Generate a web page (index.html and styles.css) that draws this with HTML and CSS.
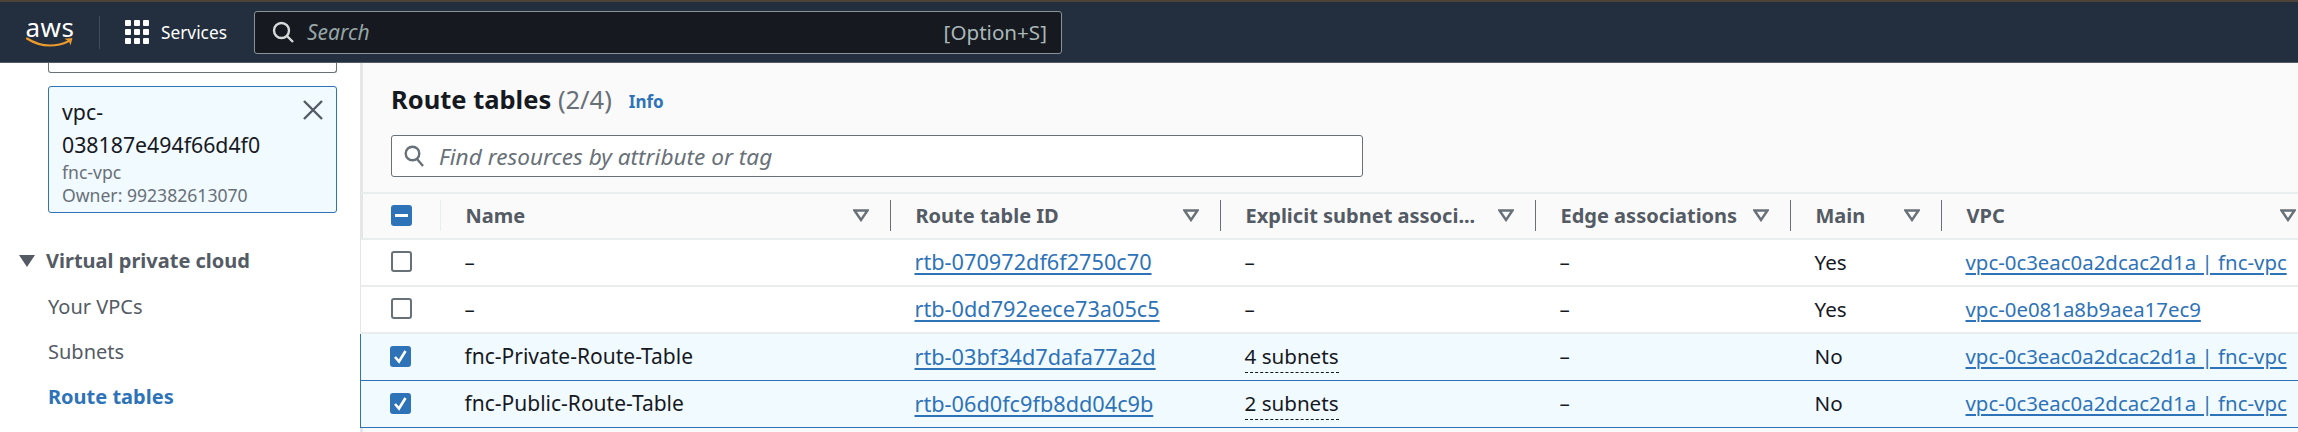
FILE: index.html
```html
<!DOCTYPE html>
<html>
<head>
  <meta charset="UTF-8" />
  <title>Route tables</title>
  <link rel="stylesheet" href="styles.css">
</head>
<body>

<header class="topbar">
  <div class="logo">
    <span class="logo-text">aws</span>
    <svg class="logo-smile" width="48" height="11" viewBox="0 0 48 11">
      <path d="M1 1.5C8 6 16 8.5 24 8.5C31 8.5 37 7 42 4.5" fill="none" stroke="#ec9a2c" stroke-width="2.2" stroke-linecap="round"/>
      <path d="M38.5 1.8L46.5 1L44.5 8.5C44 6.5 43.5 5 42.3 4.2C41.3 3.2 40 2.6 38.5 1.8Z" fill="#ec9a2c"/>
    </svg>
  </div>
  <div class="top-sep"></div>
  <div class="services">
    <div class="dots">
      <i></i><i></i><i></i><i></i><i></i><i></i><i></i><i></i><i></i>
    </div>
    <span>Services</span>
  </div>
  <div class="top-search">
    <svg width="22" height="22" viewBox="0 0 22 22"><circle cx="9.5" cy="9.5" r="7.5" fill="none" stroke="#d5dbdb" stroke-width="2.4"/><path d="M15 15L21 21" stroke="#d5dbdb" stroke-width="2.4"/></svg>
    <span class="top-search-text">Search</span>
    <span class="shortcut">[Option+S]</span>
  </div>
</header>

<div class="layout">
  <nav class="sidebar">
    <div class="cut-box"></div>
    <div class="vpc-card">
      <div class="vpc-head">
        <div class="vpc-id">vpc-<br>038187e494f66d4f0</div>
        <svg class="vpc-close" width="20" height="20" viewBox="0 0 20 20"><path d="M1 1L19 19M19 1L1 19" stroke="#545b64" stroke-width="2.4"/></svg>
      </div>
      <div class="vpc-sub">fnc-vpc</div>
      <div class="vpc-sub">Owner: 992382613070</div>
    </div>
    <div class="nav-title"><span class="nav-arrow"></span>Virtual private cloud</div>
    <a class="nav-link">Your VPCs</a>
    <a class="nav-link">Subnets</a>
    <a class="nav-link active">Route tables</a>
  </nav>

  <main class="content">
    <div class="title-row">
      <h1>Route tables <span class="count">(2/4)</span></h1>
      <a class="info">Info</a>
      <span class="pager">3</span>
    </div>
    <div class="filter">
      <svg width="20" height="22" viewBox="0 0 20 22"><circle cx="8.5" cy="8.5" r="6.8" fill="none" stroke="#687078" stroke-width="2.4"/><path d="M13 14L19 21" stroke="#687078" stroke-width="2.4"/></svg>
      <span>Find resources by attribute or tag</span>
    </div>

    <table class="routes">
      <colgroup>
        <col class="c-check"><col class="c-name"><col class="c-id"><col class="c-assoc"><col class="c-edge"><col class="c-main"><col class="c-vpc">
      </colgroup>
      <thead>
        <tr>
          <th class="check"><span class="box minus"></span></th>
          <th><div class="th-in first">Name<svg class="sort" width="16" height="13" viewBox="0 0 16 13"><path d="M1.5 1.5H14.5L8 11Z" fill="none" stroke="#687078" stroke-width="2.4"/></svg></div></th>
          <th><div class="th-in">Route table ID<svg class="sort" width="16" height="13" viewBox="0 0 16 13"><path d="M1.5 1.5H14.5L8 11Z" fill="none" stroke="#687078" stroke-width="2.4"/></svg></div></th>
          <th><div class="th-in">Explicit subnet associ...<svg class="sort" width="16" height="13" viewBox="0 0 16 13"><path d="M1.5 1.5H14.5L8 11Z" fill="none" stroke="#687078" stroke-width="2.4"/></svg></div></th>
          <th><div class="th-in">Edge associations<svg class="sort" width="16" height="13" viewBox="0 0 16 13"><path d="M1.5 1.5H14.5L8 11Z" fill="none" stroke="#687078" stroke-width="2.4"/></svg></div></th>
          <th><div class="th-in">Main<svg class="sort" width="16" height="13" viewBox="0 0 16 13"><path d="M1.5 1.5H14.5L8 11Z" fill="none" stroke="#687078" stroke-width="2.4"/></svg></div></th>
          <th><div class="th-in">VPC<svg class="sort" width="16" height="13" viewBox="0 0 16 13"><path d="M1.5 1.5H14.5L8 11Z" fill="none" stroke="#687078" stroke-width="2.4"/></svg></div></th>
        </tr>
      </thead>
      <tbody>
        <tr>
          <td class="check"><span class="box"></span></td>
          <td>–</td>
          <td><a class="rtb">rtb-070972df6f2750c70</a></td>
          <td>–</td>
          <td>–</td>
          <td>Yes</td>
          <td><a class="vpc">vpc-0c3eac0a2dcac2d1a | fnc-vpc</a></td>
        </tr>
        <tr>
          <td class="check"><span class="box"></span></td>
          <td>–</td>
          <td><a class="rtb">rtb-0dd792eece73a05c5</a></td>
          <td>–</td>
          <td>–</td>
          <td>Yes</td>
          <td><a class="vpc">vpc-0e081a8b9aea17ec9</a></td>
        </tr>
        <tr class="selected">
          <td class="check"><span class="box on"><svg width="21" height="21" viewBox="0 0 21 21"><path d="M5 11L9 15.5L15.5 5" fill="none" stroke="#fff" stroke-width="2.6"/></svg></span></td>
          <td class="name">fnc-Private-Route-Table</td>
          <td><a class="rtb">rtb-03bf34d7dafa77a2d</a></td>
          <td><span class="dotted">4 subnets</span></td>
          <td>–</td>
          <td>No</td>
          <td><a class="vpc">vpc-0c3eac0a2dcac2d1a | fnc-vpc</a></td>
        </tr>
        <tr class="selected">
          <td class="check"><span class="box on"><svg width="21" height="21" viewBox="0 0 21 21"><path d="M5 11L9 15.5L15.5 5" fill="none" stroke="#fff" stroke-width="2.6"/></svg></span></td>
          <td class="name">fnc-Public-Route-Table</td>
          <td><a class="rtb">rtb-06d0fc9fb8dd04c9b</a></td>
          <td><span class="dotted">2 subnets</span></td>
          <td>–</td>
          <td>No</td>
          <td><a class="vpc">vpc-0c3eac0a2dcac2d1a | fnc-vpc</a></td>
        </tr>
      </tbody>
    </table>
  </main>
</div>

</body>
</html>
```

FILE: styles.css
```css
html, body { margin: 0; padding: 0; height: 432px; overflow: hidden; }
body { font-family: "Noto Sans", "Open Sans", sans-serif; font-size: 20px; color: #16191f; background: #f2f3f3; }

.topbar { height: 60px; border-top: 2px solid #4d4238; border-bottom: 1px solid #545b64; background: #232f3e; display: flex; align-items: center; color: #fff; }
.logo { width: 48px; margin-left: 26px; display: flex; flex-direction: column; align-items: center; }
.logo-text { font-size: 26px; line-height: 22px; height: 20px; letter-spacing: 0.5px; }
.logo-smile { margin-top: 1px; }
.top-sep { width: 1px; height: 33px; background: #414d5c; margin-left: 25px; }
.services { display: flex; align-items: center; margin-left: 25px; font-size: 17.3px; }
.dots { display: grid; grid-template-columns: repeat(3, 6px); gap: 3px; margin-right: 12px; }
.dots i { height: 6px; background: #fff; border-radius: 1px; }
.top-search { margin-left: 27px; width: 808px; height: 43px; background: #16191f; border: 1px solid #879596; border-radius: 3px; display: flex; align-items: center; padding: 0 14px 0 17px; box-sizing: border-box; }
.top-search-text { margin-left: 13px; font-style: italic; font-size: 21px; color: #95a5a6; flex: 1; }
.shortcut { color: #aab7b8; font-size: 20.6px; }

.layout { display: flex; height: 369px; }
.sidebar { width: 360px; flex: none; background: #fff; box-sizing: border-box; }
.cut-box { width: 289px; height: 10px; margin-left: 48px; background: #fff; border: 1px solid #687078; border-top: 0; border-radius: 0 0 3px 3px; box-sizing: border-box; }
.vpc-card { width: 289px; height: 127px; margin: 13px 0 0 48px; padding: 8px 13px; background: #f1faff; border: 1px solid #2e73b8; border-radius: 3px; box-sizing: border-box; }
.vpc-head { display: flex; justify-content: space-between; }
.vpc-id { font-size: 21.3px; line-height: 33px; }
.vpc-close { margin: 5px 0 0 0; flex: none; }
.vpc-sub { font-size: 17.6px; line-height: 23px; color: #687078; }
.nav-title { margin: 35px 0 20px 19px; font-size: 20px; font-weight: 700; line-height: 26px; color: #545b64; display: flex; align-items: center; }
.nav-arrow { width: 0; height: 0; border-left: 8px solid transparent; border-right: 8px solid transparent; border-top: 12px solid #545b64; margin-right: 11px; }
.nav-link { display: block; margin: 19px 0 0 48px; line-height: 26px; color: #545b64; }
.nav-link.active { color: #2e73b8; font-weight: 700; }

.content { flex: 1; min-width: 0; background: #fafafa; border-left: 3px solid #e4e7e9; }
.title-row { height: 72px; padding-left: 28px; display: flex; align-items: center; }
h1 { margin: 0; font-size: 25.5px; font-weight: 700; }
.count { font-weight: 400; color: #687078; }
.info { margin: 4px 0 0 17px; font-size: 17px; font-weight: 700; color: #2e73b8; }
.pager { margin: 32px -9px 0 auto; color: #687078; font-size: 16px; }

.filter { width: 972px; height: 42px; margin-left: 28px; padding-left: 12px; background: #fff; border: 1px solid #687078; border-radius: 3px; box-sizing: border-box; display: flex; align-items: center; }
.filter span { margin-left: 15px; font-style: italic; color: #687078; font-size: 22.6px; }

.routes { margin: 15px 0 0 -3px; width: 1956px; table-layout: fixed; border-collapse: collapse; border-top: 2px solid #eaeded; }
.c-check { width: 79px; }
.c-name { width: 450px; }
.c-id { width: 330px; }
.c-assoc { width: 315px; }
.c-edge { width: 255px; }
.c-main { width: 151px; }
.c-vpc { width: 376px; }

th { height: 42px; padding: 0 0 2px; font-weight: 700; text-align: left; color: #545b64; font-size: 20px; border-bottom: 2px solid #eaeded; }
.th-in { display: flex; align-items: center; justify-content: space-between; height: 31px; border-left: 1px solid #687078; padding: 0 21px 0 25px; white-space: nowrap; }
.th-in.first { border-left-color: #eaeded; }
.sort { flex: none; }

td { height: 43px; padding: 0 0 2px 25px; font-size: 20.6px; background: #fff; border-bottom: 2px solid #eaeded; white-space: nowrap; }
td.check, th.check { padding: 0 0 2px 30px; }
td.name { font-size: 21px; }
.selected td { height: 44px; background: #f1faff; border-top: 1px solid #2e73b8; border-bottom: 1px solid #2e73b8; }
.selected td.check { border-left: 1px solid #2e73b8; padding-left: 29px; }

a { color: #2e73b8; }
td a { text-decoration: underline; text-underline-offset: 3px; text-decoration-thickness: 2px; }
td a.rtb { font-size: 21.7px; }
td a.vpc { font-size: 20.4px; }
.dotted { border-bottom: 1px dashed #16191f; padding-bottom: 2px; }

.box { display: block; width: 21px; height: 21px; background: #fff; border: 2px solid #687078; border-radius: 3px; box-sizing: border-box; }
.box.on, .box.minus { background: #2e73b8; border: 0; }
.box.on svg { display: block; }
.box.minus { position: relative; }
.box.minus::after { content: ""; position: absolute; left: 4px; right: 4px; top: 9px; height: 3px; background: #fff; }
```
